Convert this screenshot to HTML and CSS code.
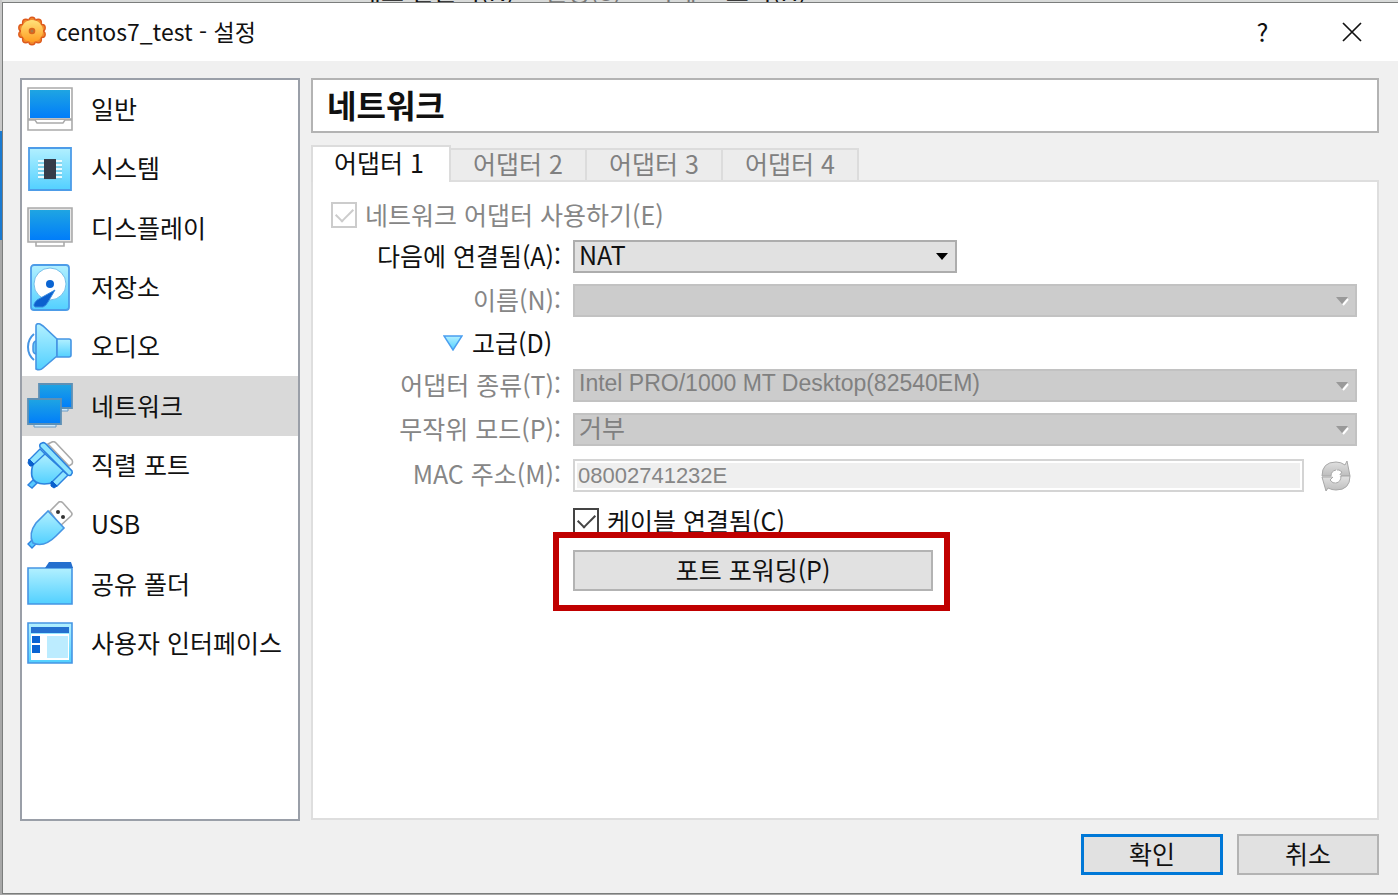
FILE: index.html
```html
<!DOCTYPE html>
<html lang="ko">
<head>
<meta charset="utf-8">
<title>centos7_test - 설정</title>
<link rel="stylesheet" href="styles.css">
</head>
<body>
<svg class="defs" aria-hidden="true">
  <defs>
    <linearGradient id="screen" x1="0" y1="0" x2="0" y2="1"><stop offset="0" stop-color="#1fa5e2"/><stop offset="1" stop-color="#007dfa"/></linearGradient>
    <linearGradient id="sky" x1="0" y1="0" x2="0" y2="1"><stop offset="0" stop-color="#b2f0ff"/><stop offset="1" stop-color="#52d0ff"/></linearGradient>
    <linearGradient id="gold" x1="0" y1="0" x2="0" y2="1"><stop offset="0" stop-color="#ffe27a"/><stop offset="1" stop-color="#ff9d22"/></linearGradient>
    <linearGradient id="silver" x1="0" y1="0" x2="0" y2="1"><stop offset="0" stop-color="#e2e2e2"/><stop offset="1" stop-color="#bdbdbd"/></linearGradient>
  </defs>
</svg>
<div class="backdrop-menu" aria-hidden="true"><span>새로 만들기(N)</span><span class="dim">설정(S)</span><span class="dim">삭제</span><span>표시(H)</span></div>
<div class="dialog">
  <header class="titlebar">
    <svg class="gear" viewBox="0 0 32 32">
      <g fill="#f08a2c" stroke="#dd5a1c" stroke-width="1.4">
        <circle cx="16" cy="4.5" r="3.2"/><circle cx="22.2" cy="6.5" r="3.2"/><circle cx="26" cy="11.7" r="3.2"/><circle cx="26" cy="18.3" r="3.2"/><circle cx="22.2" cy="23.5" r="3.2"/><circle cx="16" cy="25.5" r="3.2"/><circle cx="9.8" cy="23.5" r="3.2"/><circle cx="6" cy="18.3" r="3.2"/><circle cx="6" cy="11.7" r="3.2"/><circle cx="9.8" cy="6.5" r="3.2"/>
      </g>
      <circle cx="16" cy="15" r="11" fill="url(#gold)"/><circle cx="16" cy="15" r="3.3" fill="#d9641d"/><circle cx="16" cy="15" r="1.5" fill="#ae7945"/>
    </svg>
    <h1 class="title">centos7_test - 설정</h1>
    <button class="caption-button" type="button" aria-label="도움말"><span class="text">?</span></button>
    <button class="caption-button" type="button" aria-label="닫기"><svg width="22" height="22" viewBox="0 0 22 22"><path d="M2 2l18 18M20 2L2 20" stroke="#111" stroke-width="1.7"/></svg></button>
  </header>

  <div class="body">
    <nav class="sidebar">
      <a class="item" href="#general"><svg class="icon" viewBox="0 0 48 48"><path d="M2 2h44v31H2zM2 34h44v10H2z" fill="#fff" stroke="#aaa" stroke-width="1.6"/><path d="M9 34l2 3h26l2-3" fill="#fff" stroke="#aaa" stroke-width="1.4"/><path d="M4 4h40v28H4z" fill="url(#screen)"/></svg><span class="text">일반</span></a>
      <a class="item" href="#system"><svg class="icon" viewBox="0 0 48 48"><path d="M3 3h42v42H3z" fill="url(#sky)" stroke="#4d9ce8" stroke-width="1.8"/><path d="M12 16h24M12 20h24M12 24h24M12 28h24M12 32h24" stroke="#e9fbff" stroke-width="2"/><path d="M12 18h24M12 22h24M12 26h24M12 30h24M12 34h24" stroke="#78bfd5" stroke-width=".8"/><path d="M18 14h12v20H18z" fill="#363c49"/></svg><span class="text">시스템</span></a>
      <a class="item" href="#display"><svg class="icon" viewBox="0 0 48 48"><path d="M10 37v5h28v-5" fill="#fff" stroke="#aaa" stroke-width="1.6"/><path d="M2 4h44v34H2z" fill="#e5e5e5" stroke="#aaa" stroke-width="1.6"/><path d="M4 6h40v30H4z" fill="url(#screen)"/></svg><span class="text">디스플레이</span></a>
      <a class="item" href="#storage"><svg class="icon" viewBox="0 0 48 48"><rect x="5" y="1" width="38" height="45" rx="3" fill="url(#sky)" stroke="#4d9ce8" stroke-width="1.8"/><circle cx="24" cy="20" r="16" fill="#fff" stroke="#75bfea"/><circle cx="24" cy="20" r="4" fill="#0a64d2"/><path d="M29 26L11 36q-5 5-2 7h8q3-1 5-5z" fill="#0c60ce" stroke="#398be0"/></svg><span class="text">저장소</span></a>
      <a class="item" href="#audio"><svg class="icon" viewBox="0 0 48 48"><path d="M11 18q-4 0-4 5v4q0 4 4 4" fill="#6dcaf5" stroke="#4595e4" stroke-width="1.5"/><path d="M8 11q-6 5-6 13t6 13" fill="none" stroke="#4595e4" stroke-width="2"/><path d="M10 3q0-3 4-2l3 2 14 13v17L17 45q-3 3-7 1z" fill="url(#sky)" stroke="#4595e4" stroke-width="1.6"/><path d="M31 16h12q2 0 2 2v14q0 2-2 2H31z" fill="url(#sky)" stroke="#4595e4" stroke-width="1.6"/></svg><span class="text">오디오</span></a>
      <a class="item active" href="#network" aria-current="page"><svg class="icon" viewBox="0 0 48 48"><path d="M32 26h10v3H32z" fill="#cdeaff" stroke="#6b9bc4"/><path d="M13 2h33v24H13z" fill="url(#screen)" stroke="#5e90b5" stroke-width="1.8"/><path d="M8 41h22v4H8z" fill="#cdeaff" stroke="#6b9bc4"/><path d="M2 17h33v25H2z" fill="url(#screen)" stroke="#5e90b5" stroke-width="1.8"/></svg><span class="text">네트워크</span></a>
      <a class="item" href="#serial"><svg class="icon" viewBox="0 0 48 48"><path d="M22 3l4-2q2-1 4 1l16 17q1 2 0 4l-3 2z" fill="#fff" stroke="#aaa" stroke-width="1.6"/><path d="M7 39l-5 5 4 3 5-5z" fill="#59caff" stroke="#2c83df" stroke-width="1.4"/><path d="M18 12L7 23q-4 14 3 18t19 0l10-10z" fill="url(#sky)" stroke="#2c83df" stroke-width="1.6"/><path d="M14 8L3 19l4 5L19 13z" fill="#8fe5ff" stroke="#2c83df" stroke-width="1.4"/><path d="M3 18l5 5-2 2H4l-2-3z" fill="#0a60cd" stroke="#0a60cd"/><path d="M37 30L26 41l5 4 11-11z" fill="#8fe5ff" stroke="#2c83df" stroke-width="1.4"/><path d="M26 40l5 5-3 2-3-2v-4z" fill="#0a60cd" stroke="#0a60cd"/><path d="M14 6q-1-3 2-4 2-1 4 1l26 27q1 2-1 4-2 1-3 0z" fill="#8ee5ff" stroke="#2c83df" stroke-width="1.6"/></svg><span class="text">직렬 포트</span></a>
      <a class="item" href="#usb"><svg class="icon" viewBox="0 0 48 48"><path d="M24 10l9-9q2-1 4 1l8 9q2 2 0 4L34 25z" fill="#fff" stroke="#aaa" stroke-width="1.6"/><circle cx="32" cy="11" r="2" fill="#333"/><circle cx="37" cy="16" r="2" fill="#333"/><path d="M6 39l-4 4 4 4 5-5z" fill="#59caff" stroke="#2c83df" stroke-width="1.4"/><path d="M22 10L10 22Q2 33 7 42q11 5 23-7l8-8z" fill="url(#sky)" stroke="#4595e4" stroke-width="1.6"/></svg><span class="text">USB</span></a>
      <a class="item" href="#shared"><svg class="icon" viewBox="0 0 48 48"><path d="M2 8h44v36H2z" fill="url(#sky)" stroke="#4595e4" stroke-width="1.6"/><path d="M19 8l4-6h22l2 6z" fill="#246fce"/></svg><span class="text">공유 폴더</span></a>
      <a class="item" href="#interface"><svg class="icon" viewBox="0 0 48 48"><path d="M2 4h44v40H2z" fill="url(#sky)" stroke="#4595e4" stroke-width="1.6"/><path d="M5 8h38v6H5z" fill="#2470cf"/><path d="M5 15h38v26H5z" fill="#fff"/><path d="M6 17h8v7H6zM6 26h8v8H6z" fill="#0a64d2"/><path d="M21 17h21v22H21z" fill="#bcecff"/></svg><span class="text">사용자 인터페이스</span></a>
    </nav>

    <main class="content">
      <h2 class="heading">네트워크</h2>
      <div class="tabs" role="tablist">
        <button class="tab selected" type="button" role="tab" aria-selected="true">어댑터 1</button>
        <button class="tab" type="button" role="tab" aria-selected="false">어댑터 2</button>
        <button class="tab" type="button" role="tab" aria-selected="false">어댑터 3</button>
        <button class="tab" type="button" role="tab" aria-selected="false">어댑터 4</button>
      </div>
      <section class="panel" role="tabpanel">
        <label class="check disabled"><input type="checkbox" checked disabled><span class="text">네트워크 어댑터 사용하기(E)</span></label>
        <div class="form">
          <label class="label text" for="attached">다음에 연결됨(A):</label>
          <div class="combo short"><select id="attached"><option>NAT</option></select><svg class="arrow" viewBox="0 0 14 10"><path d="M1 1h12L7 8z" fill="#000"/></svg></div>

          <label class="label text disabled" for="name">이름(N):</label>
          <div class="combo"><select id="name" disabled><option></option></select><svg class="arrow" viewBox="0 0 14 10"><path d="M8 9l5-6" stroke="#fff" stroke-width="2"/><path d="M1 1h12L7 8z" fill="#999"/></svg></div>

          <button class="advanced" type="button"><svg width="20" height="16" viewBox="0 0 20 16"><path d="M1 1h18l-9 14z" fill="url(#sky)" stroke="#4b9ff0" stroke-width="1.5"/></svg><span class="text">고급(D)</span></button>

          <label class="label text disabled" for="type">어댑터 종류(T):</label>
          <div class="combo"><select class="latin" id="type" disabled><option>Intel PRO/1000 MT Desktop(82540EM)</option></select><svg class="arrow" viewBox="0 0 14 10"><path d="M8 9l5-6" stroke="#fff" stroke-width="2"/><path d="M1 1h12L7 8z" fill="#999"/></svg></div>

          <label class="label text disabled" for="promiscuous">무작위 모드(P):</label>
          <div class="combo"><select id="promiscuous" disabled><option>거부</option></select><svg class="arrow" viewBox="0 0 14 10"><path d="M8 9l5-6" stroke="#fff" stroke-width="2"/><path d="M1 1h12L7 8z" fill="#999"/></svg></div>

          <label class="label text disabled" for="mac">MAC 주소(M):</label>
          <div class="mac">
            <input class="field" id="mac" type="text" value="08002741232E" disabled>
            <button class="refresh" type="button" disabled aria-label="새 MAC 주소 생성"><svg width="30" height="32" viewBox="0 0 30 32"><path d="M1 16Q1 2 15 2q5 0 9 3l2-4 3 15H18l3-4q-3-3-6-2-5 1-5 6z" fill="url(#silver)" stroke="#a8a8a8"/><path d="M29 16q0 14-14 14-4 0-8-2l-2 3-4-14h11l-3 3q3 4 6 3 5-1 5-7z" fill="url(#silver)" stroke="#a8a8a8"/><path d="M16 9l-5 8h4l-1 6 6-8h-4z" fill="#fff"/></svg></button>
          </div>

          <label class="check cable"><input type="checkbox" checked><span class="text">케이블 연결됨(C)</span></label>

          <div class="forwarding"><button class="button" type="button">포트 포워딩(P)</button><span class="highlight"></span></div>
        </div>
      </section>
    </main>
  </div>

  <footer class="footer">
    <button class="button default" type="button">확인</button>
    <button class="button" type="button">취소</button>
  </footer>
</div>
</body>
</html>
```
FILE: styles.css
```css
* { box-sizing: border-box; }

body {
  margin: 0;
  height: 100vh;
  display: flex;
  flex-direction: column;
  overflow: hidden;
  padding: 0 0 1px 2px;
  background: linear-gradient(#c8c8c8 131px, #1a7ad0 131px, #1a7ad0 240px, #a8a8a8 240px);
  font-family: "Noto Sans CJK KR", "Noto Sans", sans-serif;
  font-size: 25px;
  line-height: 30px;
  color: #111;
}

button, input, select {
  margin: 0;
  font: inherit;
  color: inherit;
}

.text { padding-bottom: 3px; }

.defs { position: absolute; width: 0; height: 0; }

.backdrop-menu {
  flex: none;
  display: flex;
  align-items: flex-end;
  gap: 29px;
  height: 2px;
  padding-left: 356px;
  overflow: hidden;
  background: #d8dad9;
  line-height: 24px;
}

.backdrop-menu .dim { color: #777; }

.dialog {
  flex: 1;
  min-height: 0;
  display: flex;
  flex-direction: column;
  border: solid #7b7d7c;
  border-width: 1px 0 1px 1px;
  background: #f0f0f0;
}

.titlebar {
  display: flex;
  align-items: center;
  height: 58px;
  padding: 0 2px 0 13px;
  background: #fff;
}

.gear { width: 32px; height: 32px; }

.title {
  flex: 1;
  margin: 0 0 0 8px;
  padding-bottom: 3px;
  font-size: 23px;
  font-weight: 400;
}

.caption-button {
  display: flex;
  align-items: center;
  justify-content: center;
  width: 89px;
  height: 56px;
  padding: 0;
  border: 0;
  background: none;
}

.body {
  flex: 1;
  min-height: 0;
  display: flex;
  gap: 11px;
  padding: 17px 19px 0 17px;
}

.sidebar {
  display: grid;
  grid-auto-rows: 1fr;
  width: 280px;
  padding: 0 0 146px;
  border: 2px solid #9a9fa8;
  background: #fff;
}

.item {
  display: flex;
  align-items: center;
  gap: 17px;
  padding-left: 4px;
  color: #111;
  text-decoration: none;
  white-space: nowrap;
}

.item.active { background: #d9d9d9; }

.icon { flex: none; width: 48px; height: 48px; }

.content {
  flex: 1;
  min-width: 0;
  display: flex;
  flex-direction: column;
  padding-bottom: 1px;
}

.heading {
  margin: 0;
  padding: 7px 14px 10px;
  border: 2px solid #b3b3b3;
  background: #fff;
  font-size: 32px;
  line-height: 34px;
  font-weight: 700;
}

.tabs {
  display: flex;
  align-items: flex-end;
  margin-top: 12px;
}

.tab {
  width: 136px;
  height: 32px;
  padding: 0 0 3px;
  border: solid #dcdcdc;
  border-width: 2px 2px 0 0;
  background: #ececec;
  color: #808080;
  line-height: 27px;
}

.tab.selected {
  z-index: 1;
  width: 140px;
  height: 37px;
  margin-bottom: -2px;
  padding: 0 4px 5px 0;
  border-left-width: 2px;
  background: #fff;
  color: #111;
}

.panel {
  flex: 1;
  display: flex;
  flex-direction: column;
  gap: 11px;
  padding: 19px 20px 19px 18px;
  border: 2px solid #dedede;
  background: #fff;
}

.check {
  display: flex;
  align-items: center;
  gap: 8px;
  height: 28px;
}

.check input {
  appearance: none;
  display: grid;
  place-items: center;
  width: 26px;
  height: 26px;
  border: 2px solid #444;
  background: #fff;
}

.check input:checked::before {
  content: "";
  width: 15px;
  height: 8px;
  border: solid #444;
  border-width: 0 0 2px 2px;
  transform: translateY(-2px) rotate(-45deg);
}

.disabled { color: #868686; }
.check input:disabled, .check input:disabled::before { border-color: #ccc; }

.form {
  display: grid;
  grid-template-columns: 230px minmax(0, 1fr);
  grid-auto-rows: minmax(30px, auto);
  gap: 11px 12px;
  align-items: center;
}

.label { text-align: right; white-space: nowrap; }

.combo { display: grid; align-items: center; }
.combo.short { width: 384px; }

.combo select {
  grid-area: 1 / 1;
  appearance: none;
  width: 100%;
  height: 33px;
  padding: 0 4px 4px;
  border: 2px solid #c2c2c2;
  border-radius: 0;
  background: #ccc;
  color: #808080;
  line-height: 25px;
  opacity: 1;
}

.combo.short select {
  border-color: #adadad;
  background: #e1e1e1;
  color: #111;
}

.combo .latin, .field {
  font-family: "Liberation Sans", "Noto Sans CJK KR", sans-serif;
  font-size: 23px;
}

.arrow {
  grid-area: 1 / 1;
  justify-self: end;
  width: 14px;
  height: 10px;
  margin-right: 8px;
  pointer-events: none;
}

.advanced {
  grid-column: 1 / -1;
  justify-self: start;
  display: flex;
  align-items: center;
  gap: 9px;
  height: 30px;
  margin-left: 112px;
  padding: 0;
  border: 0;
  background: none;
}

.mac {
  display: flex;
  align-items: center;
  gap: 17px;
  padding: 2px 6px 0 0;
}

.mac .field {
  flex: 1;
  min-width: 0;
  height: 33px;
  padding: 0 3px;
  border: 2px solid #d4d4d4;
  outline: 2px solid #fff;
  outline-offset: -4px;
  background: #efefef;
  color: #868686;
  font-size: 22px;
}

.refresh {
  display: flex;
  padding: 0;
  border: 0;
  background: none;
}

.cable { grid-column: 2; height: 36px; }

.forwarding {
  grid-column: 2;
  position: relative;
  justify-self: start;
  display: flex;
  width: 360px;
}

.forwarding .button { flex: 1; }

.highlight {
  position: absolute;
  inset: -18px -17px -20px -20px;
  border: 6px solid #c00000;
  pointer-events: none;
}

.button {
  width: 142px;
  height: 41px;
  padding: 0 0 4px;
  border: 2px solid #b3b3b3;
  background: #e1e1e1;
}

.button.default { border: 3px solid #0078d7; }

.footer {
  display: flex;
  justify-content: flex-end;
  gap: 14px;
  padding: 13px 19px 18px;
}
```
